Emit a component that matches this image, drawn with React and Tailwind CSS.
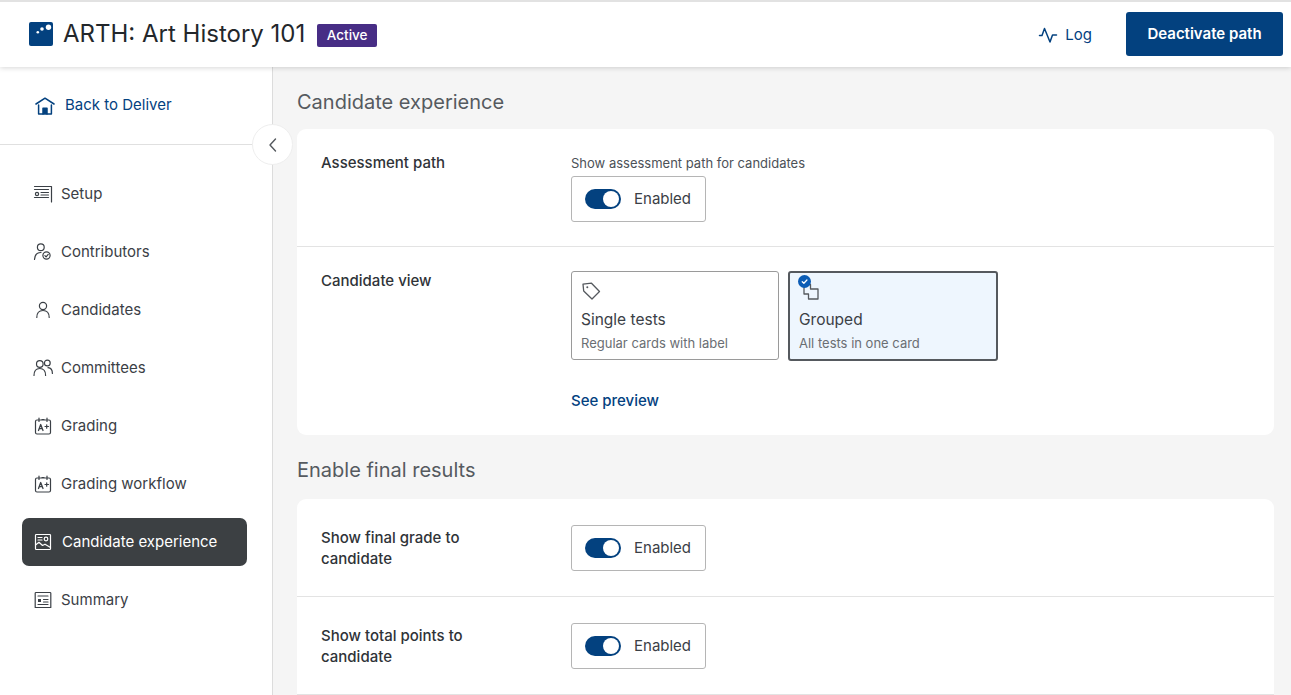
import React from "react";

const S = ({ children, className = "w-5 h-5" }) => (
  <svg viewBox="0 0 20 20" fill="none" stroke="currentColor" strokeWidth="1.2" strokeLinecap="round" strokeLinejoin="round" className={className}>{children}</svg>
);

const Setup = () => (
  <S className="w-[20px] h-[20px]"><path d="M1.5 2.5H18.5V18" /><path d="M1.5 5.5H15.5" /><circle cx="4" cy="10" r="1.6" /><path d="M8 8.5H15.5M8 11H15.5" strokeWidth="1.1" /><path d="M1.5 13.5H15.5" /></S>
);
const Contributors = () => (
  <S><circle cx="7.8" cy="5.2" r="3.4" /><path d="M1.5 17.5C1.7 13 4 10.5 8 10.5" /><circle cx="13.5" cy="13.5" r="3.6" fill="#fff" /><path d="M11.9 13.6L13.1 14.8L15.2 12.4" /></S>
);
const Person = () => (
  <S><circle cx="10" cy="6" r="3.6" /><path d="M3.8 17.5C3.8 13 6.2 10.5 10 10.5S16.2 13 16.2 17.5" /></S>
);
const People = () => (
  <S><circle cx="6.8" cy="6" r="3.3" /><path d="M1 17.5C1 13 3.2 10.5 6.8 10.5S12.6 13 12.6 17.5" /><circle cx="14.3" cy="5" r="2.9" /><path d="M15 9.7C17.8 10 19.4 12.2 19.4 15.5" /></S>
);
const Grade = () => (
  <S><rect x="2.5" y="4" width="15" height="14" rx="1.5" /><path d="M6 2V5.5M14 2V5.5M9 3.5H11" /><path d="M5.5 14.5L7.7 8.5L10 14.5M6.3 12.7H9.2" strokeWidth="1.3" /><path d="M12 10.5H15.5M13.7 8.8V12.2" strokeWidth="1.2" /></S>
);
const Experience = () => (
  <S className="w-[20px] h-[20px]"><rect x="2.5" y="2.5" width="15" height="15" rx="0.8" /><path d="M5 5.5H9M5 8H9" /><circle cx="13" cy="7" r="1.8" /><path d="M2.5 13L6 10.3L9.5 13.5L12 12.2L17.5 15.5" /></S>
);
const Summary = () => (
  <S><path d="M2.2 17.5V3.2A.7.7 0 0 1 3 2.5H17A.7.7 0 0 1 17.8 3.2V17.5H2.2Z" /><path d="M5 6H15" /><rect x="5" y="9" width="3" height="3" fill="currentColor" stroke="none" /><path d="M10.5 9.5H15M10.5 12H15M5 14.5H15" /></S>
);
const Home = () => (
  <svg viewBox="0 0 20 20" fill="none" stroke="currentColor" strokeWidth="1.5" strokeLinecap="round" strokeLinejoin="round" className="w-5 h-5">
    <path d="M1 8L10 2.2L19 8" /><path d="M3.6 9V18H16.4V9" /><path d="M8 18V12.2H12V18" fill="currentColor" />
  </svg>
);
const Toggle = () => (
  <div className="flex items-center w-[135px] h-[46px] border border-[#b5b5b5] rounded-[3px] bg-white pl-[13px]">
    <span className="flex items-center justify-end w-[36px] h-[20px] rounded-full bg-[#03417f] pr-[2px]">
      <span className="w-[16px] h-[16px] rounded-full bg-white" />
    </span>
    <span className="ml-[13px] text-[15px] leading-5 text-[#3b4046]">Enabled</span>
  </div>
);

const nav = [
  ["Setup", Setup],
  ["Contributors", Contributors],
  ["Candidates", Person],
  ["Committees", People],
  ["Grading", Grade],
  ["Grading workflow", Grade],
  ["Candidate experience", Experience, true],
  ["Summary", Summary],
];

const Row = ({ label, last }) => (
  <div className={`flex items-center pl-[24px] h-[98px] ${last ? "" : "border-b border-[#e3e3e3]"}`}>
    <div className="w-[250px] pr-[70px] text-[15px] leading-[21px] font-medium text-[#2f3338]">{label}</div>
    <Toggle />
  </div>
);

export default function App() {
  return (
    <div className="h-[695px] w-[1291px] overflow-hidden bg-white flex flex-col font-['Inter',sans-serif]">
      <header className="relative z-20 h-[67px] shrink-0 bg-white border-t-[2px] border-[#e2e2e2] flex items-center pl-[29px] pr-[8px] shadow-[0_1px_5px_rgba(0,0,0,0.16)]">
        <svg viewBox="0 0 24 24" className="w-[24px] h-[24px] rounded-[2px] mt-[-2px]">
          <rect width="24" height="24" fill="#03417f" />
          <circle cx="19.5" cy="5.2" r="2.7" fill="#fff" />
          <circle cx="13" cy="7" r="1.8" fill="#fff" />
          <circle cx="8.8" cy="10.2" r="1.3" fill="#fff" />
        </svg>
        <h1 className="ml-[10px] mt-[-2px] text-[24px] leading-8 font-normal text-[#23272b]">ARTH: Art History 101</h1>
        <span className="ml-[12px] w-[60px] h-[23px] mt-[2px] rounded-[2px] bg-[#472d85] text-white text-[13.5px] font-medium flex items-center justify-center">Active</span>
        <div className="ml-auto flex items-center mt-[1px] text-[#03417f]">
          <svg viewBox="0 0 20 20" fill="none" stroke="currentColor" strokeWidth="1.5" strokeLinecap="round" strokeLinejoin="round" className="w-[20px] h-[20px]">
            <path d="M1.5 10.5H4L6.5 3.5L12 17L14.5 10H18.5" />
          </svg>
          <span className="ml-[7px] text-[15px]">Log</span>
        </div>
        <button className="ml-[34px] w-[157px] h-[44px] mt-[-1px] rounded-[3px] bg-[#03417f] text-white text-[15px] font-semibold">Deactivate path</button>
      </header>
      <div className="flex flex-1 min-h-0 relative">
        <aside className="relative w-[273px] shrink-0 bg-white border-r border-[#dcdcdc]">
          <a className="flex items-center h-[78px] pl-[35px] border-b border-[#e0e0e0] text-[#03417f] text-[15px] font-normal">
            <Home />
            <span className="ml-[10px]">Back to Deliver</span>
          </a>
          <nav className="mt-[25px] flex flex-col gap-[10px] pl-[22px] w-[247px]">
            {nav.map(([t, I, active]) => (
              <div key={t} className={`flex items-center h-[48px] rounded-[7px] pl-[11px] ${active ? "bg-[#3c4043] text-white" : "text-[#3b4046]"}`}>
                <I />
                <span className={`text-[15px] ${active ? "ml-[9px]" : "ml-[8px]"}`}>{t}</span>
              </div>
            ))}
          </nav>
          <button className="absolute z-10 left-[252px] top-[57px] w-[41px] h-[41px] rounded-full bg-white border border-[#eeeeee] flex items-center justify-center text-[#55595e]">
            <svg viewBox="0 0 16 16" fill="none" stroke="currentColor" strokeWidth="1.4" strokeLinecap="round" strokeLinejoin="round" className="w-[16px] h-[16px]"><path d="M10.5 2L5 8L10.5 14" /></svg>
          </button>
        </aside>
        <main className="flex-1 bg-[#f5f5f5] pl-[24px] pr-[17px]">
          <h2 className="mt-[21px] h-[28px] text-[20px] leading-7 font-normal text-[#555a5f]">Candidate experience</h2>
          <section className="mt-[13px] bg-white rounded-[9px]">
            <div className="flex pl-[24px] h-[118px] border-b border-[#e3e3e3]">
              <div className="w-[250px] pt-[24px] text-[15px] leading-5 font-medium text-[#2f3338]">Assessment path</div>
              <div className="pt-[26px]">
                <div className="text-[13px] leading-4 text-[#4c5157] mb-[5px]">Show assessment path for candidates</div>
                <Toggle />
              </div>
            </div>
            <div className="flex pl-[24px] h-[188px]">
              <div className="w-[250px] pt-[24px] text-[15px] leading-5 font-medium text-[#2f3338]">Candidate view</div>
              <div className="pt-[24px]">
                <div className="flex gap-[9px]">
                  <div className="w-[208px] h-[89px] border border-[#9a9a9a] rounded-[3px] pl-[9px] pt-[9px]">
                    <svg viewBox="0 0 20 20" fill="none" stroke="#55595e" strokeWidth="1.3" strokeLinejoin="round" className="w-[20px] h-[20px]">
                      <path d="M2 3.2L10.5 2.2L18.5 10.5L11 18L2.7 10Z" /><circle cx="6.3" cy="6.3" r="1" fill="#55595e" stroke="none" />
                    </svg>
                    <div className="mt-[9px] text-[15.5px] leading-5 text-[#3b4046]">Single tests</div>
                    <div className="mt-[3px] text-[13px] leading-5 text-[#6a6e73]">Regular cards with label</div>
                  </div>
                  <div className="relative w-[210px] h-[90px] border-2 border-[#55595e] rounded-[3px] bg-[#eef6fe] pl-[9px] pt-[8px]">
                    <svg viewBox="0 0 20 20" fill="none" stroke="#55595e" strokeWidth="1.3" strokeLinejoin="round" className="ml-[2px] w-[20px] h-[20px]">
                      <path d="M3 3.5H9.5V8H17V18H7.5V13H3Z" />
                    </svg>
                    <span className="absolute left-[8px] top-[2px] w-[13px] h-[13px] rounded-full bg-[#0b5cb5] flex items-center justify-center">
                      <svg viewBox="0 0 10 10" fill="none" stroke="#fff" strokeWidth="1.4" strokeLinecap="round" strokeLinejoin="round" className="w-[9px] h-[9px]"><path d="M2.5 5.2L4.3 7L7.7 3.3" /></svg>
                    </span>
                    <div className="mt-[9px] text-[15.5px] leading-5 text-[#3b4046]">Grouped</div>
                    <div className="mt-[3px] text-[13px] leading-5 text-[#6a6e73]">All tests in one card</div>
                  </div>
                </div>
                <div className="mt-[30px] text-[15px] leading-5 font-medium text-[#03417f]">See preview</div>
              </div>
            </div>
          </section>
          <h2 className="mt-[21px] h-[28px] text-[20px] leading-7 font-normal text-[#555a5f]">Enable final results</h2>
          <section className="mt-[15px] bg-white rounded-t-[9px]">
            <Row label="Show final grade to candidate" />
            <Row label="Show total points to candidate" />
          </section>
        </main>
      </div>
    </div>
  );
}
